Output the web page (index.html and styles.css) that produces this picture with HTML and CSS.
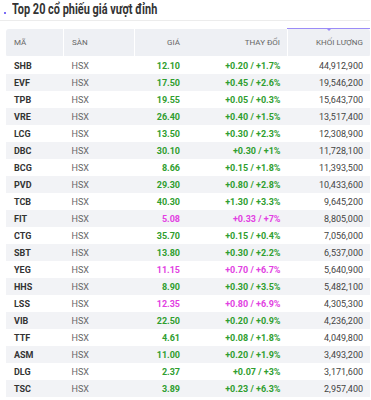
FILE: index.html
```html
<!DOCTYPE html>
<html lang="vi">
<head>
    <meta charset="UTF-8">
    <meta name="viewport" content="width=device-width, initial-scale=1.0">
    <title>Top 20 cổ phiếu giá vượt đỉnh</title>
    <link rel="stylesheet" href="styles.css">
</head>
<body>
    <div class="box-title">
        <span class="dot"></span>
        <h2>Top 20 cổ phiếu giá vượt đỉnh</h2>
    </div>

    <table class="stock-table">
        <thead>
            <tr>
                <th class="col-code">Mã</th>
                <th class="col-ex">Sàn</th>
                <th class="col-price num">Giá</th>
                <th class="col-chg num">Thay đổi</th>
                <th class="col-vol num sorted">Khối lượng</th>
            </tr>
        </thead>
        <tbody>
            <tr><td class="code">SHB</td><td class="ex">HSX</td><td class="num up">12.10</td><td class="num up">+0.20 / +1.7%</td><td class="num vol">44,912,900</td></tr>
            <tr><td class="code">EVF</td><td class="ex">HSX</td><td class="num up">17.50</td><td class="num up">+0.45 / +2.6%</td><td class="num vol">19,546,200</td></tr>
            <tr><td class="code">TPB</td><td class="ex">HSX</td><td class="num up">19.55</td><td class="num up">+0.05 / +0.3%</td><td class="num vol">15,643,700</td></tr>
            <tr><td class="code">VRE</td><td class="ex">HSX</td><td class="num up">26.40</td><td class="num up">+0.40 / +1.5%</td><td class="num vol">13,517,400</td></tr>
            <tr><td class="code">LCG</td><td class="ex">HSX</td><td class="num up">13.50</td><td class="num up">+0.30 / +2.3%</td><td class="num vol">12,308,900</td></tr>
            <tr><td class="code">DBC</td><td class="ex">HSX</td><td class="num up">30.10</td><td class="num up">+0.30 / +1%</td><td class="num vol">11,728,100</td></tr>
            <tr><td class="code">BCG</td><td class="ex">HSX</td><td class="num up">8.66</td><td class="num up">+0.15 / +1.8%</td><td class="num vol">11,393,500</td></tr>
            <tr><td class="code">PVD</td><td class="ex">HSX</td><td class="num up">29.30</td><td class="num up">+0.80 / +2.8%</td><td class="num vol">10,433,600</td></tr>
            <tr><td class="code">TCB</td><td class="ex">HSX</td><td class="num up">40.30</td><td class="num up">+1.30 / +3.3%</td><td class="num vol">9,645,200</td></tr>
            <tr><td class="code">FIT</td><td class="ex">HSX</td><td class="num ceil">5.08</td><td class="num ceil">+0.33 / +7%</td><td class="num vol">8,805,000</td></tr>
            <tr><td class="code">CTG</td><td class="ex">HSX</td><td class="num up">35.70</td><td class="num up">+0.15 / +0.4%</td><td class="num vol">7,056,000</td></tr>
            <tr><td class="code">SBT</td><td class="ex">HSX</td><td class="num up">13.80</td><td class="num up">+0.30 / +2.2%</td><td class="num vol">6,537,000</td></tr>
            <tr><td class="code">YEG</td><td class="ex">HSX</td><td class="num ceil">11.15</td><td class="num ceil">+0.70 / +6.7%</td><td class="num vol">5,640,900</td></tr>
            <tr><td class="code">HHS</td><td class="ex">HSX</td><td class="num up">8.90</td><td class="num up">+0.30 / +3.5%</td><td class="num vol">5,482,100</td></tr>
            <tr><td class="code">LSS</td><td class="ex">HSX</td><td class="num ceil">12.35</td><td class="num ceil">+0.80 / +6.9%</td><td class="num vol">4,305,300</td></tr>
            <tr><td class="code">VIB</td><td class="ex">HSX</td><td class="num up">22.50</td><td class="num up">+0.20 / +0.9%</td><td class="num vol">4,236,200</td></tr>
            <tr><td class="code">TTF</td><td class="ex">HSX</td><td class="num up">4.61</td><td class="num up">+0.08 / +1.8%</td><td class="num vol">4,049,800</td></tr>
            <tr><td class="code">ASM</td><td class="ex">HSX</td><td class="num up">11.00</td><td class="num up">+0.20 / +1.9%</td><td class="num vol">3,493,200</td></tr>
            <tr><td class="code">DLG</td><td class="ex">HSX</td><td class="num up">2.37</td><td class="num up">+0.07 / +3%</td><td class="num vol">3,171,600</td></tr>
            <tr><td class="code">TSC</td><td class="ex">HSX</td><td class="num up">3.89</td><td class="num up">+0.23 / +6.3%</td><td class="num vol">2,957,400</td></tr>
        </tbody>
    </table>
</body>
</html>
```
FILE: styles.css
```css
body {
    margin: 0;
    padding: 0 1px 0 6px;
    font-family: Roboto, "Liberation Sans", sans-serif;
    background: #fff;
    color: #333;
}

.box-title {
    display: flex;
    align-items: center;
    height: 20px;
    border-bottom: 1px solid #ececec;
    margin-left: -6px;
    padding-left: 4px;
}

.dot {
    width: 2px;
    height: 2px;
    background: #7b6cf6;
    margin-right: 6px;
    margin-top: 6px;
}

/* the site uses a condensed face; squeeze Roboto to the same width */
.box-title h2 {
    margin: 0;
    font-family: Roboto, sans-serif;
    font-weight: bold;
    font-size: 14px;
    color: #333;
    line-height: 20px;
    margin-top: -2px;
    white-space: nowrap;
    transform: scaleX(0.78);
    transform-origin: left center;
}

.stock-table {
    width: 100%;
    border-collapse: collapse;
    margin-top: 7px;
    font-size: 9px;
}

.stock-table th {
    height: 27px;
    padding: 0 7px 0 8px;
    background: #eef0f4;
    color: #666;
    font-weight: normal;
    font-size: 8px;
    text-transform: uppercase;
    text-align: left;
    border-left: 1px solid #fff;
}

.stock-table th:first-child {
    border-left: none;
    border-radius: 3px 0 0 3px;
}

.stock-table th:last-child {
    border-radius: 0 3px 3px 0;
}

.stock-table th.col-chg {
    border-left: none;
}

.col-code { width: 42px; }
.col-ex { width: 55px; }
.col-price { width: 37px; }
.col-chg { width: 85px; }

.stock-table th.sorted {
    position: relative;
    border-top: 1px solid #9b8cf7;
}

.stock-table th.sorted::after {
    content: "";
    position: absolute;
    top: 0;
    left: 50%;
    margin-left: -2px;
    border: 2px solid transparent;
    border-top-color: #9b8cf7;
}

.stock-table td {
    height: 17px;
    padding: 0 7px 0 8px;
    white-space: nowrap;
}

.stock-table tbody tr:first-child td {
    border-top: 1px solid #fff;
}

.stock-table tbody tr:nth-child(even) td {
    background: #f2f3f6;
}

.num {
    text-align: right;
}

.stock-table th.num {
    text-align: right;
}

.code {
    font-weight: bold;
    color: #333;
}

.ex {
    color: #666;
}

.up {
    color: #2f9e2f;
    font-weight: bold;
}

.ceil {
    color: #e23fe2;
    font-weight: bold;
}

.vol {
    color: #444;
}
```
